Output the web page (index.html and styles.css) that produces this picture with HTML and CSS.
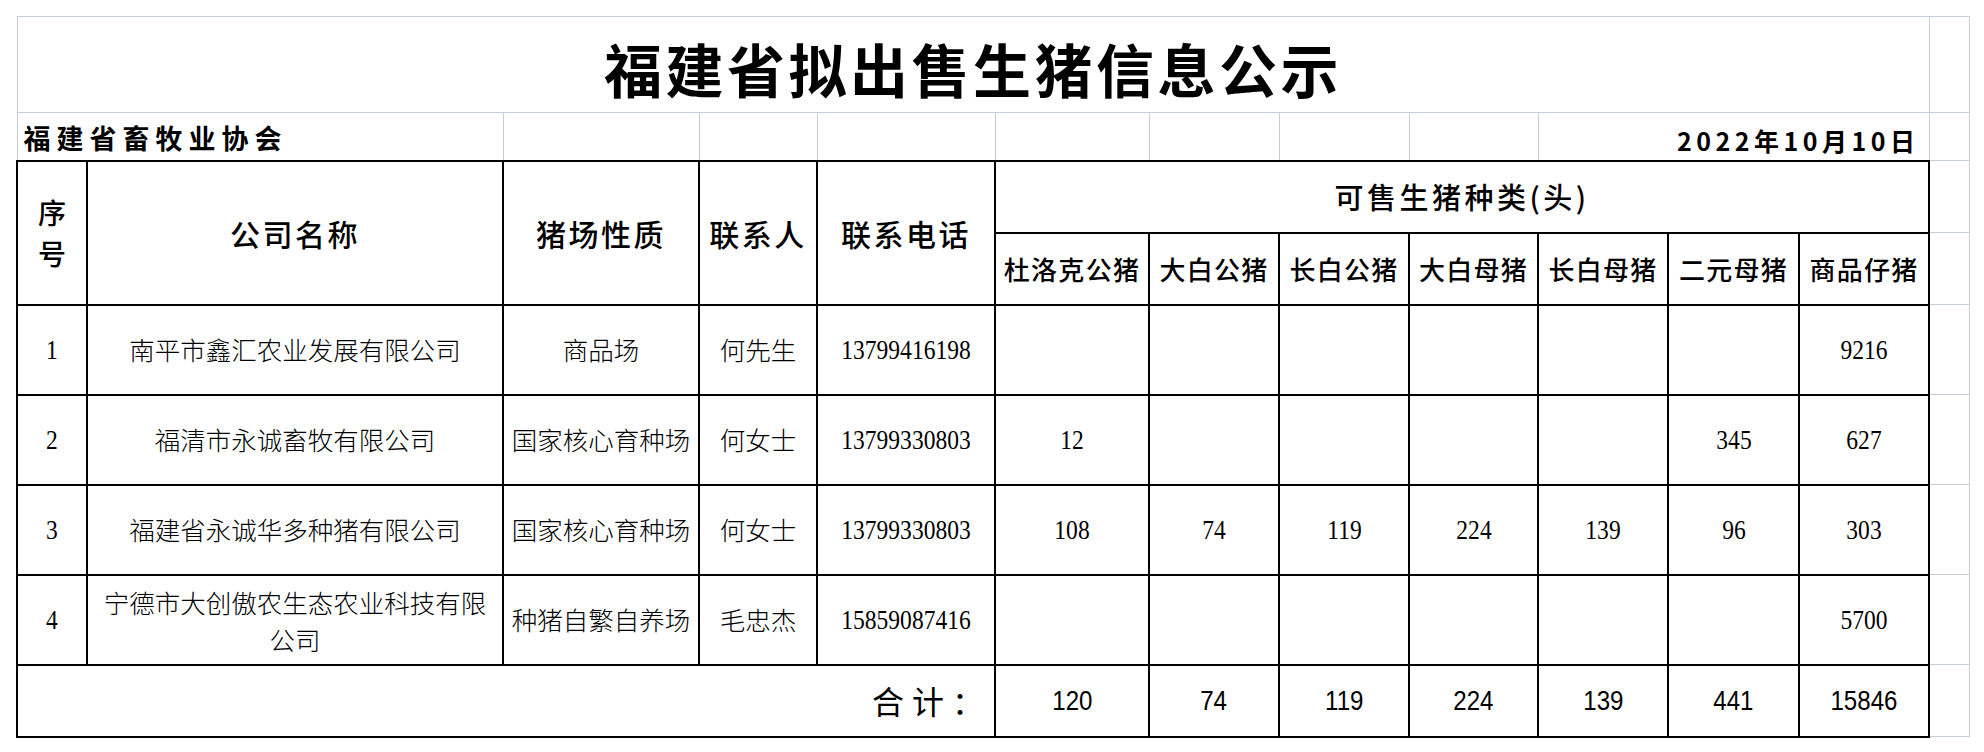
FILE: index.html
```html
<!DOCTYPE html>
<html lang="zh-CN">
<head>
<meta charset="utf-8">
<title>福建省拟出售生猪信息公示</title>
<link rel="stylesheet" href="styles.css">
</head>
<body>
<div class="sheet">
<table class="grid">
  <colgroup>
    <col class="c1"><col class="c2"><col class="c3"><col class="c4"><col class="c5">
    <col class="c6"><col class="c7"><col class="c8"><col class="c9"><col class="c10">
    <col class="c11"><col class="c12"><col class="c13">
  </colgroup>
  <tr class="r-title">
    <td colspan="12" class="title">福建省拟出售生猪信息公示</td>
    <td></td>
  </tr>
  <tr class="r-sub">
    <td colspan="2" class="org">福建省畜牧业协会</td>
    <td></td><td></td><td></td><td></td><td></td><td></td><td></td>
    <td colspan="3" class="date">2022年10月10日</td>
    <td></td>
  </tr>
  <tr class="r-head">
    <td rowspan="2" class="b hd seq"><span class="seq-ch">序</span><span class="seq-ch">号</span></td>
    <td rowspan="2" class="b hd">公司名称</td>
    <td rowspan="2" class="b hd">猪场性质</td>
    <td rowspan="2" class="b hd">联系人</td>
    <td rowspan="2" class="b hd">联系电话</td>
    <td colspan="7" class="b hd kinds">可售生猪种类(头)</td>
    <td></td>
  </tr>
  <tr class="r-head">
    <td class="b sh">杜洛克公猪</td>
    <td class="b sh">大白公猪</td>
    <td class="b sh">长白公猪</td>
    <td class="b sh">大白母猪</td>
    <td class="b sh">长白母猪</td>
    <td class="b sh">二元母猪</td>
    <td class="b sh">商品仔猪</td>
    <td></td>
  </tr>
  <tr class="r-data">
    <td class="b"><span class="n">1</span></td>
    <td class="b tx">南平市鑫汇农业发展有限公司</td>
    <td class="b tx">商品场</td>
    <td class="b tx">何先生</td>
    <td class="b"><span class="n">13799416198</span></td>
    <td class="b"></td><td class="b"></td><td class="b"></td><td class="b"></td><td class="b"></td><td class="b"></td>
    <td class="b"><span class="n">9216</span></td>
    <td></td>
  </tr>
  <tr class="r-data">
    <td class="b"><span class="n">2</span></td>
    <td class="b tx">福清市永诚畜牧有限公司</td>
    <td class="b tx">国家核心育种场</td>
    <td class="b tx">何女士</td>
    <td class="b"><span class="n">13799330803</span></td>
    <td class="b"><span class="n">12</span></td>
    <td class="b"></td><td class="b"></td><td class="b"></td><td class="b"></td>
    <td class="b"><span class="n">345</span></td>
    <td class="b"><span class="n">627</span></td>
    <td></td>
  </tr>
  <tr class="r-data">
    <td class="b"><span class="n">3</span></td>
    <td class="b tx">福建省永诚华多种猪有限公司</td>
    <td class="b tx">国家核心育种场</td>
    <td class="b tx">何女士</td>
    <td class="b"><span class="n">13799330803</span></td>
    <td class="b"><span class="n">108</span></td>
    <td class="b"><span class="n">74</span></td>
    <td class="b"><span class="n">119</span></td>
    <td class="b"><span class="n">224</span></td>
    <td class="b"><span class="n">139</span></td>
    <td class="b"><span class="n">96</span></td>
    <td class="b"><span class="n">303</span></td>
    <td></td>
  </tr>
  <tr class="r-data">
    <td class="b"><span class="n">4</span></td>
    <td class="b tx wrap">宁德市大创傲农生态农业科技有限公司</td>
    <td class="b tx">种猪自繁自养场</td>
    <td class="b tx">毛忠杰</td>
    <td class="b"><span class="n">15859087416</span></td>
    <td class="b"></td><td class="b"></td><td class="b"></td><td class="b"></td><td class="b"></td><td class="b"></td>
    <td class="b"><span class="n">5700</span></td>
    <td></td>
  </tr>
  <tr class="r-total">
    <td colspan="5" class="b sum">合计：</td>
    <td class="b"><span class="t">120</span></td>
    <td class="b"><span class="t">74</span></td>
    <td class="b"><span class="t">119</span></td>
    <td class="b"><span class="t">224</span></td>
    <td class="b"><span class="t">139</span></td>
    <td class="b"><span class="t">441</span></td>
    <td class="b"><span class="t">15846</span></td>
    <td></td>
  </tr>
</table>
</div>
</body>
</html>
```

FILE: styles.css
```css
html, body {
  margin: 0;
  padding: 0;
  background: #ffffff;
}

.sheet {
  padding: 16px 0 0 16px;
}

.grid {
  border-collapse: collapse;
  table-layout: fixed;
  width: 1953px;
  font-family: "Noto Sans CJK SC", "Noto Sans", sans-serif;
  color: #000;
}

.c1 { width: 70px; }
.c2 { width: 416px; }
.c3 { width: 196px; }
.c4 { width: 118px; }
.c5 { width: 178px; }
.c6 { width: 154px; }
.c7 { width: 130px; }
.c8 { width: 130px; }
.c9 { width: 129px; }
.c10 { width: 130px; }
.c11 { width: 131px; }
.c12 { width: 130px; }
.c13 { width: 40px; }

.grid td {
  border: 1px solid #c5ccdd;
  padding: 0;
  text-align: center;
  vertical-align: middle;
  line-height: 1.2;
  white-space: nowrap;
}

.grid td.b {
  border: 2px solid #000;
}

.r-title { height: 96px; }
.r-sub { height: 48px; }
.r-head { height: 72px; }
.r-data { height: 90px; }
.r-total { height: 72px; }

.title {
  font-size: 58px;
  font-weight: 700;
  letter-spacing: 3.5px;
  padding-top: 8px !important;
}

.org {
  text-align: left !important;
  vertical-align: bottom !important;
  font-size: 27px;
  font-weight: 700;
  letter-spacing: 6px;
  padding: 0 0 5px 6px !important;
}

.date {
  text-align: right !important;
  vertical-align: bottom !important;
  font-size: 25px;
  font-weight: 700;
  letter-spacing: 4.5px;
  padding: 0 9px 5px 0 !important;
}

.hd {
  font-size: 30px;
  font-weight: 500;
  letter-spacing: 2.5px;
}

.seq {
  letter-spacing: 0;
}

.seq-ch {
  display: block;
  font-size: 28px;
  line-height: 41px;
}

.kinds {
  font-size: 29px;
  letter-spacing: 3.5px;
}

.sh {
  font-size: 26px;
  font-weight: 500;
  letter-spacing: 1.3px;
}

.tx {
  font-size: 25.5px;
  font-weight: 300;
}

.wrap {
  white-space: normal !important;
  line-height: 37px !important;
  padding: 0 12px !important;
}

.n {
  display: inline-block;
  font-family: "Liberation Serif", "Times New Roman", serif;
  font-size: 28px;
  transform: scaleX(0.84);
}

.t {
  display: inline-block;
  font-family: "Liberation Sans", Arial, sans-serif;
  font-size: 28px;
  transform: scaleX(0.86);
}

.sum {
  text-align: right !important;
  font-size: 32px;
  font-weight: 400;
  letter-spacing: 8px;
  padding-right: 2px !important;
}
```
